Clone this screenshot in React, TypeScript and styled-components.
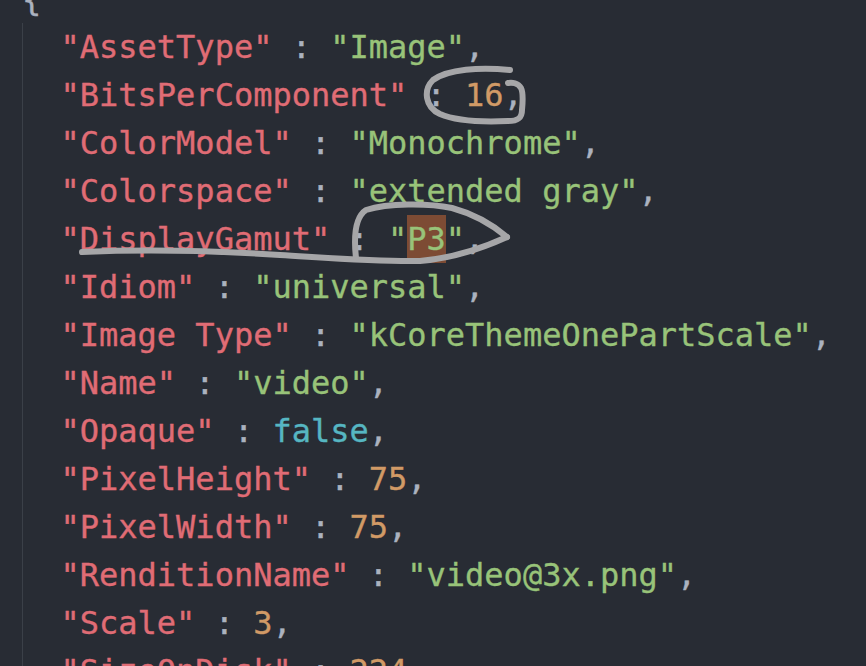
import React from "react";
import styled, { createGlobalStyle } from "styled-components";

const GlobalStyle = createGlobalStyle`
  html, body {
    margin: 0;
    padding: 0;
    background: #282c34;
    overflow: hidden;
  }
`;

const Screen = styled.div`
  width: 866px;
  height: 666px;
  overflow: hidden;
  background: #282c34;
  position: relative;
`;

const Editor = styled.div`
  position: relative;
  margin-top: -25px;
  padding-left: 22px;
  font-family: "DejaVu Sans Mono", "Liberation Mono", monospace;
  font-size: 32px;
  line-height: 48px;
  color: #abb2bf;
  -webkit-text-stroke: 0.35px currentColor;
`;

const Line = styled.div`
  height: 48px;
  white-space: pre;
`;

const Block = styled.div`
  border-left: 1.5px solid #3b4048;
  padding-left: 37.5px;
`;

const Key = styled.span`
  color: #e06c75;
`;

const Str = styled.span`
  color: #98c379;
`;

const Num = styled.span`
  color: #d19a66;
`;

const Bool = styled.span`
  color: #56b6c2;
`;

const Punc = styled.span`
  color: #abb2bf;
`;

const Found = styled.span`
  display: inline-block;
  height: 48px;
  vertical-align: top;
  background: #7d4b34;
`;

const Ink = styled.svg`
  position: absolute;
  left: 0;
  top: 0;
  pointer-events: none;
`;

type Kind = "str" | "num" | "bool" | "found";

const rows: { key: string; value: string; kind: Kind }[] = [
  { key: "AssetType", value: "Image", kind: "str" },
  { key: "BitsPerComponent", value: "16", kind: "num" },
  { key: "ColorModel", value: "Monochrome", kind: "str" },
  { key: "Colorspace", value: "extended gray", kind: "str" },
  { key: "DisplayGamut", value: "P3", kind: "found" },
  { key: "Idiom", value: "universal", kind: "str" },
  { key: "Image Type", value: "kCoreThemeOnePartScale", kind: "str" },
  { key: "Name", value: "video", kind: "str" },
  { key: "Opaque", value: "false", kind: "bool" },
  { key: "PixelHeight", value: "75", kind: "num" },
  { key: "PixelWidth", value: "75", kind: "num" },
  { key: "RenditionName", value: "video@3x.png", kind: "str" },
  { key: "Scale", value: "3", kind: "num" },
  { key: "SizeOnDisk", value: "224", kind: "num" },
];

function Value({ kind, value }: { kind: Kind; value: string }) {
  if (kind === "num") return <Num>{value}</Num>;
  if (kind === "bool") return <Bool>{value}</Bool>;
  if (kind === "found")
    return (
      <Str>
        "<Found>{value}</Found>"
      </Str>
    );
  return <Str>"{value}"</Str>;
}

export default function App() {
  return (
    <Screen>
      <GlobalStyle />
      <Editor>
        <Line>
          <Punc>{"{"}</Punc>
        </Line>
        <Block>
          {rows.map((r) => (
            <Line key={r.key}>
              <Key>"{r.key}"</Key>
              <Punc> : </Punc>
              <Value kind={r.kind} value={r.value} />
              <Punc>,</Punc>
            </Line>
          ))}
        </Block>
      </Editor>
      <Ink width="866" height="666" viewBox="0 0 866 666">
        <g
          fill="none"
          stroke="#a6a6a8"
          strokeWidth="6"
          strokeLinecap="round"
          strokeLinejoin="round"
        >
          <path d="M510,70 C480,67 448,69 433,80 C423,90 425,107 440,114 C456,121 486,122 508,121 C518,121 522,118 522,110 C523,100 523,92 521,88 C518,83 512,82 508,83" />
          <path d="M82,252 C150,249 220,251 280,255 C330,258 380,262 420,261 C455,258 485,247 507,237" />
          <path d="M356,258 C354,240 354,218 366,210 C388,203 428,203 452,208 C474,214 494,226 507,237" />
        </g>
      </Ink>
    </Screen>
  );
}
